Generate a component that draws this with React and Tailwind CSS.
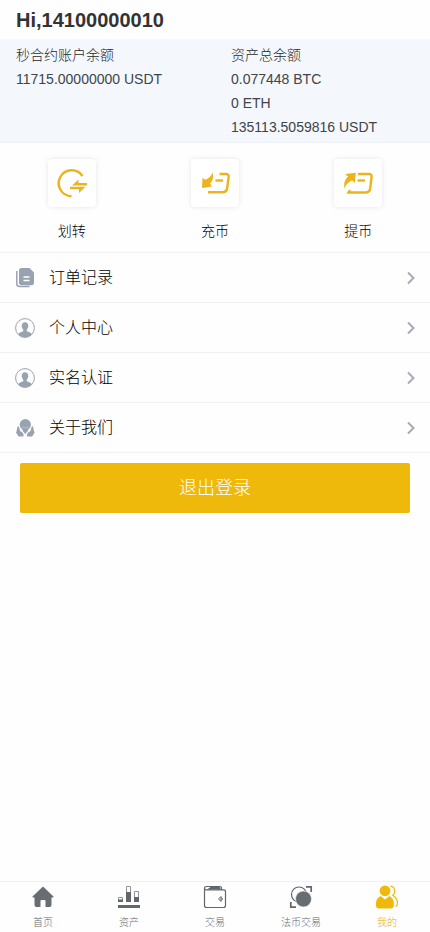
import React from "react";

function TransferIcon() {
  return (
    <svg viewBox="0 0 48 48" className="size-12" fill="none" stroke="#ecb41c" strokeWidth="2.4" aria-hidden="true">
      <path d="M34.5 17A13 13 0 1 0 23.5 37.2" />
      <path d="M24 26.500L30.500 20.500V24H39V26.500Z" fill="#ecb41c" stroke="none" />
      <path d="M22 27.800H37.500L31 34V30.300H22Z" fill="#ecb41c" stroke="none" />
    </svg>
  );
}

function DepositIcon() {
  return (
    <svg viewBox="0 0 48 48" className="size-12" fill="none" stroke="#ecb41c" strokeWidth="2.4" aria-hidden="true">
      <path d="M28.5 15H35Q38 15 37.6 18L36.2 29Q35.6 33.2 31.5 33.2H17" />
      <path d="M24.5 21.5H32" />
      <path d="M21.500 13.500C22.800 18 22 22 19 24.500L21 27.500L11 29L11.500 18.800L14.300 20.800C17.500 19.500 20 17.500 21.500 13.500Z" fill="#ecb41c" stroke="none" />
    </svg>
  );
}

function WithdrawIcon() {
  return (
    <svg viewBox="0 0 48 48" className="size-12" fill="none" stroke="#ecb41c" strokeWidth="2.4" aria-hidden="true">
      <path d="M24 15H35Q38 15 37.6 18L36.2 29.5Q35.6 33.5 31.5 33.5H14.5L16 31" />
      <path d="M23.5 21.5H31" />
      <path d="M21.800 13.800L21 24L18.200 21.500C14 23 12.200 25.500 10.500 29.500C9.500 24 11 20.500 14 17.500L11.200 15Z" fill="#ecb41c" stroke="none" />
    </svg>
  );
}

function OrdersIcon() {
  return (
    <svg viewBox="0 0 20 20" className="size-5" fill="none" aria-hidden="true">
      <path d="M1.800 3V15.800Q1.800 18.600 4.600 18.600H14.500" stroke="#98a2b1" strokeWidth="1.500" />
      <path d="M6.500 0H14.500L19 4.500V14.500Q19 17.200 16.500 17.200H6.500Q4 17.200 4 14.500V2.500Q4 0 6.500 0Z" fill="#98a2b1" />
      <path d="M8.500 9H14.500M8.500 12.500H14.500" stroke="#fff" strokeWidth="1.400" />
    </svg>
  );
}

function PersonIcon() {
  return (
    <svg viewBox="0 0 20 20" className="size-5" fill="none" aria-hidden="true">
      <circle cx="10" cy="10" r="9.400" stroke="#98a2b1" strokeWidth="1" />
      <path d="M10 4.300C12.300 4.300 13.300 5.800 13.200 7.800C13.500 8 13.300 9.500 12.800 9.700C12.600 10.800 12.100 11.400 11.700 11.900V13.200C14 14 16 14.600 16.900 16.200A9.200 9.200 0 0 1 3.100 16.200C4 14.600 6 14 8.300 13.200V11.900C7.900 11.400 7.400 10.800 7.200 9.700C6.700 9.500 6.500 8 6.800 7.800C6.700 5.800 7.700 4.300 10 4.300Z" fill="#98a2b1" />
    </svg>
  );
}

function AboutIcon() {
  return (
    <svg viewBox="0 0 20 20" className="size-5" fill="#98a2b1" aria-hidden="true">
      <circle cx="10.300" cy="6.600" r="5.600" />
      <path d="M7 8.800Q10.300 11 13.600 8.800" fill="none" stroke="#c5ccd5" strokeWidth="0.700" />
      <path d="M3.500 8C1.500 9 2.500 12 1 14.500L3.500 18.500H8.500C9 15.500 7.500 14 5.300 13.200C4.500 11.500 4.500 9.500 3.500 8ZM17.100 8C19.100 9 18.100 12 19.600 14.500L17.100 18.500H12.100C11.600 15.500 13.100 14 15.300 13.200C16.100 11.500 16.100 9.500 17.100 8Z" />
      <path d="M7 11.500H13.600L12.200 13.800L10.300 16L8.400 13.800Z" />
    </svg>
  );
}

function HomeIcon() {
  return (
    <svg viewBox="0 0 24 24" className="size-6" fill="#686d74" aria-hidden="true">
      <path d="M12 1.500L22.500 11.500Q23 12.500 21.500 12.500H20.500V20Q20.500 22 18.500 22H14.500V16Q14.500 15 13.500 15H10.500Q9.500 15 9.500 16V22H5.500Q3.500 22 3.500 20V12.500H2.500Q1 12.500 1.500 11.500Z" />
    </svg>
  );
}

function AssetsIcon() {
  return (
    <svg viewBox="0 0 24 24" className="size-6" fill="none" aria-hidden="true">
      <path d="M1.500 12.500H5.500V16.500H1.500ZM9.500 1.500H13.500V16.500H9.500ZM17.500 6.500H21.500V16.500H17.500Z" stroke="#92969b" strokeWidth="1" />
      <path d="M1 14.500H6V17H1ZM9 7H14V17H9ZM17 12H22V17H17ZM1 20H23V23H1Z" fill="#62676e" />
    </svg>
  );
}

function TradeIcon() {
  return (
    <svg viewBox="0 0 24 24" className="size-6" fill="none" stroke="#62676e" strokeWidth="1.200" aria-hidden="true">
      <path d="M18.500 4.500V3.500Q18.500 1.500 16.500 1.500H3.500Q1.500 1.500 1.500 3.500V20.500Q1.500 22.500 3.500 22.500H20.500Q22.500 22.500 22.500 20.500V6.500Q22.500 4.800 20.500 4.800H3.500Q1.500 4.800 1.500 3.500" />
      <path d="M4 4.500L7.500 2H16.500L18 4.500Z" fill="#62676e" stroke="none" />
      <path d="M18 11.500V16.500L15.500 14ZM18 12.500L19.800 14L18 15.500" strokeWidth="1" />
    </svg>
  );
}

function FiatIcon() {
  return (
    <svg viewBox="0 0 24 24" className="size-6" fill="none" stroke="#62676e" aria-hidden="true">
      <circle cx="10" cy="9.500" r="7.500" strokeWidth="1.200" />
      <circle cx="14.500" cy="14" r="8" fill="#686d74" stroke="#fefefe" strokeWidth="0.600" />
      <path d="M17 1.800H22.200V7M1.800 17V22.200H7" strokeWidth="1.700" />
    </svg>
  );
}

function MineIcon() {
  return (
    <svg viewBox="0 0 24 24" className="size-6" fill="#efb90b" aria-hidden="true">
      <circle cx="10" cy="5.800" r="5.400" />
      <path d="M5.500 11L10 14.500L14.500 11Q18.800 13.500 18.800 18V20.500Q18.800 23.500 15.500 23.500H4Q1 23.500 1 20.500V18Q1 13.500 5.500 11Z" />
      <path d="M15.500 1.200C20.500 2 20.800 7.500 17.800 10.200C21 12.500 22.800 15 22.500 18.500Q22.300 20.500 20.500 21.500" fill="none" stroke="#efb90b" strokeWidth="1.200" />
    </svg>
  );
}

const actions = [
  { label: "划转", Icon: TransferIcon },
  { label: "充币", Icon: DepositIcon },
  { label: "提币", Icon: WithdrawIcon },
];

const rows = [
  { label: "订单记录", Icon: OrdersIcon },
  { label: "个人中心", Icon: PersonIcon },
  { label: "实名认证", Icon: PersonIcon },
  { label: "关于我们", Icon: AboutIcon },
];

const tabs = [
  { label: "首页", Icon: HomeIcon },
  { label: "资产", Icon: AssetsIcon },
  { label: "交易", Icon: TradeIcon },
  { label: "法币交易", Icon: FiatIcon },
  { label: "我的", Icon: MineIcon, active: true },
];

export default function App() {
  return (
    <div className="flex min-h-screen flex-col bg-[#fefefe] font-['Liberation_Sans','Noto_Sans_CJK_SC',sans-serif] font-light text-black">
      <header className="px-4 pt-1">
        <h1 className="text-xl leading-8 font-bold text-[#333]">Hi,14100000010</h1>
      </header>

      <section className="mt-[3px] grid grid-cols-2 border-b border-[#edf0f5] bg-[#f4f7fb] pt-1 pb-[3px] text-sm leading-6 text-[#40444b]">
        <div className="px-4">
          <h2 className="text-[#24272c]">秒合约账户余额</h2>
          <p>11715.00000000 USDT</p>
        </div>
        <div className="px-4">
          <h2 className="text-[#24272c]">资产总余额</h2>
          <p>0.077448 BTC</p>
          <p>0 ETH</p>
          <p>135113.5059816 USDT</p>
        </div>
      </section>

      <section className="grid grid-cols-3 border-b border-[#eff1f5] pt-4 pb-[9px]">
        {actions.map(({ label, Icon }) => (
          <button key={label} type="button" className="flex flex-col items-center gap-3 text-sm leading-6">
            <span className="rounded bg-white shadow-[0_0_5px_rgba(60,60,90,0.12)]">
              <Icon />
            </span>
            {label}
          </button>
        ))}
      </section>

      <nav>
        {rows.map(({ label, Icon }) => (
          <a key={label} href="#" className="flex h-[50px] items-center border-b border-[#eff1f5] px-[15px] text-base">
            <Icon />
            <span className="ml-3.5 flex-1">{label}</span>
            <svg viewBox="0 0 8 14" className="h-3.5 w-2" fill="none" stroke="#a6abb5" strokeWidth="2" aria-hidden="true">
              <path d="M1 1.500L6.500 7L1 12.500" />
            </svg>
          </a>
        ))}
      </nav>

      <div className="px-5 pt-2.5">
        <button type="button" className="h-[50px] w-full rounded-xs bg-[#efb90b] text-lg text-white">
          退出登录
        </button>
      </div>

      <footer className="sticky bottom-0 mt-auto border-t border-[#eff0f4] bg-[#fefefe] pt-[3px]">
        <nav className="grid grid-cols-5">
          {tabs.map(({ label, Icon, active }) => (
            <a
              key={label}
              href="#"
              className={`flex flex-col items-center gap-1.5 pb-px text-[10px] leading-4 ${active ? "text-[#eaae00]" : "text-[#64686e]"}`}
            >
              <Icon />
              {label}
            </a>
          ))}
        </nav>
      </footer>
    </div>
  );
}
